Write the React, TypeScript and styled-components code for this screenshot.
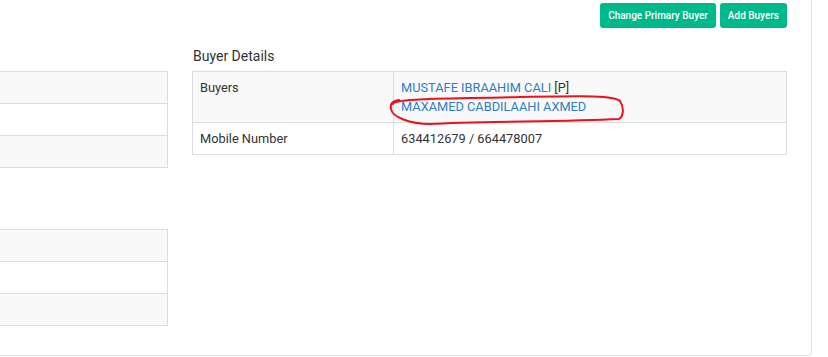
import React from "react";
import styled, { createGlobalStyle } from "styled-components";

const GlobalStyle = createGlobalStyle`
  html, body {
    margin: 0;
    padding: 0;
    background: #ffffff;
    overflow: hidden;
  }
  body {
    font-family: Roboto, "Liberation Sans", Arial, sans-serif;
    font-size: 13px;
    color: #333333;
  }
`;

const Page = styled.div`
  position: relative;
  width: 828px;
  height: 357px;
  overflow: hidden;
`;

const Card = styled.div`
  box-sizing: border-box;
  width: 1264px;
  margin: -12px 0 0 -452px;
  padding: 14px 24px 11px 24px;
  border: 1px solid #e0e0e0;
  border-radius: 4px;
  background: #ffffff;
`;

const Toolbar = styled.div`
  display: flex;
  justify-content: flex-end;
  gap: 4px;
  height: 25px;
`;

const ActionButton = styled.button`
  height: 25px;
  padding: 0 8px;
  border: none;
  border-radius: 3px;
  background: #00b98b;
  color: #ffffff;
  font-family: Roboto, "Liberation Sans", Arial, sans-serif;
  font-size: 10px;
  font-weight: 500;
  cursor: pointer;
`;

const Columns = styled.div`
  display: grid;
  grid-template-columns: 595px 595px;
  column-gap: 24px;
`;

const Column = styled.div`
  display: flex;
  flex-direction: column;
`;

const Heading = styled.h4`
  margin: 18px 0 5px;
  padding-left: 1px;
  font-size: 14px;
  line-height: 20px;
  font-weight: 400;
  color: #333333;
`;

const Table = styled.table`
  width: 100%;
  border-collapse: collapse;
  margin-bottom: 18px;
  font-size: 12.8px;
`;

const Row = styled.tr<{ $striped?: boolean }>`
  background: ${(p) => (p.$striped ? "#f9f9f9" : "#ffffff")};
`;

const Cell = styled.td<{ $label?: boolean }>`
  width: ${(p) => (p.$label ? "186px" : "auto")};
  padding: 6px 7px;
  border: 1px solid #dddddd;
  line-height: 19px;
  vertical-align: top;
  color: #333333;
`;

const BuyerLink = styled.a`
  display: block;
  color: #2f7dc0;
  text-decoration: none;
`;

const Primary = styled.span`
  color: #333333;
`;

const Annotation = styled.svg`
  position: absolute;
  left: 0;
  top: 0;
  pointer-events: none;
`;

const EmptyTable = ({ rows }: { rows: number }) => (
  <Table>
    <tbody>
      {Array.from({ length: rows }).map((_, i) => (
        <Row key={i} $striped={i % 2 === 0}>
          <Cell $label>&nbsp;</Cell>
          <Cell>&nbsp;</Cell>
        </Row>
      ))}
    </tbody>
  </Table>
);

export default function App() {
  return (
    <Page>
      <GlobalStyle />
      <Card>
        <Toolbar>
          <ActionButton>Change Primary Buyer</ActionButton>
          <ActionButton>Add Buyers</ActionButton>
        </Toolbar>
        <Columns>
          <Column>
            <Heading>&nbsp;</Heading>
            <EmptyTable rows={3} />
            <Heading>&nbsp;</Heading>
            <EmptyTable rows={3} />
          </Column>
          <Column>
            <Heading>Buyer Details</Heading>
            <Table>
              <tbody>
                <Row $striped>
                  <Cell $label>Buyers</Cell>
                  <Cell>
                    <BuyerLink href="#">
                      MUSTAFE IBRAAHIM CALI <Primary>[P]</Primary>
                    </BuyerLink>
                    <BuyerLink href="#">MAXAMED CABDILAAHI AXMED</BuyerLink>
                  </Cell>
                </Row>
                <Row>
                  <Cell $label>Mobile Number</Cell>
                  <Cell>634412679 / 664478007</Cell>
                </Row>
              </tbody>
            </Table>
          </Column>
        </Columns>
      </Card>
      <Annotation width="828" height="357" viewBox="0 0 828 357">
        <path
          d="M393 104 C395 98, 450 99, 520 97 C580 96, 614 95, 620 101 C624 107, 624 116, 619 119 C560 122, 480 121, 430 124 C410 124, 392 117, 391 109 C390 104, 392 101, 399 100"
          fill="none"
          stroke="#e8131b"
          strokeWidth="2"
          strokeLinecap="round"
        />
      </Annotation>
    </Page>
  );
}
